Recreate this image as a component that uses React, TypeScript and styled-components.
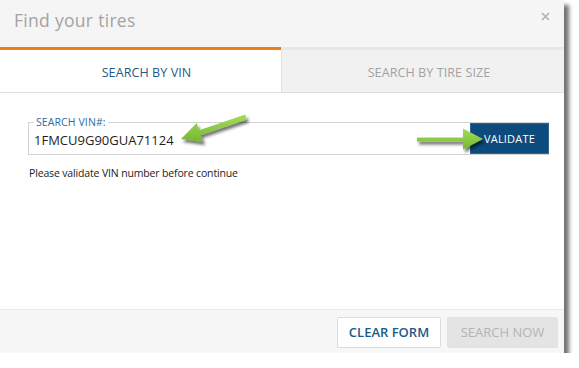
import React from "react";
import styled, { createGlobalStyle } from "styled-components";

const Global = createGlobalStyle`
  html, body { margin: 0; padding: 0; background: #ffffff; }
  body { font-family: "Open Sans", "Liberation Sans", sans-serif; }
  * { box-sizing: border-box; }
`;

const Dialog = styled.div`
  position: relative;
  width: 564px;
  height: 353px;
  background: #ffffff;
  display: flex;
  flex-direction: column;
  box-shadow: 5px 5px 4px rgba(0, 0, 0, 0.55);
`;

const Header = styled.div`
  height: 47px;
  background: #f5f5f5;
  display: flex;
  justify-content: space-between;
  align-items: flex-start;
  padding: 8px 14px 0 14px;
`;

const Title = styled.div`
  font-size: 17.5px;
  line-height: 24px;
  color: #a3a3a3;
  letter-spacing: 0.3px;
`;

const Close = styled.svg`
  margin-top: 4px;
  width: 9px;
  height: 9px;
`;

const Tabs = styled.div`
  display: flex;
  height: 46px;
`;

const Tab = styled.div<{ $active?: boolean; $w?: number }>`
  flex: ${(p) => (p.$w ? `0 0 ${p.$w}px` : "1 1 auto")};
  display: flex;
  align-items: center;
  justify-content: center;
  padding: 2px 0 0 12px;
  font-size: 12.5px;
  letter-spacing: 0.1px;
  background: ${(p) => (p.$active ? "#ffffff" : "#f1f1f1")};
  color: ${(p) => (p.$active ? "#1d5a88" : "#a2a2a2")};
  border-top: 3px solid ${(p) => (p.$active ? "#f07d1b" : "#e8e8e8")};
  border-left: ${(p) => (p.$active ? "none" : "1px solid #e2e2e2")};
  border-bottom: 1px solid #dedede;
`;

const Body = styled.div`
  flex: 1;
  padding: 29px 15px 0 28px;
`;

const Field = styled.div`
  position: relative;
  display: flex;
  align-items: stretch;
  height: 33px;
  border: 1px solid #d2d2d2;
  border-right: none;
`;

const Legend = styled.span`
  position: absolute;
  top: -6px;
  left: 5px;
  padding: 0 2px;
  background: #ffffff;
  font-size: 10.5px;
  line-height: 11px;
  color: #2d6ba1;
  letter-spacing: 0.1px;
`;

const VinText = styled.div`
  flex: 1;
  display: flex;
  align-items: center;
  padding: 2px 0 0 5px;
  font-size: 13px;
  color: #1e1e1e;
`;

const Validate = styled.button`
  width: 79px;
  border: 1px solid #2f6696;
  background: #0c4b7b;
  color: #ffffff;
  font-family: "Open Sans", "Liberation Sans", sans-serif;
  font-size: 11px;
  letter-spacing: 0.2px;
  padding: 0;
  margin: 0;
  cursor: pointer;
`;

const Message = styled.div`
  margin: 11px 0 0 1px;
  font-size: 10.5px;
  line-height: 14px;
  letter-spacing: -0.15px;
  color: #1c1c1c;
`;

const Footer = styled.div`
  height: 44px;
  border-top: 1px solid #e8e8e8;
  background: #f7f7f7;
  display: flex;
  justify-content: flex-end;
  align-items: center;
  gap: 6px;
  padding: 1px 6px 0 0;
`;

const FooterButton = styled.button<{ $disabled?: boolean; $w: number }>`
  width: ${(p) => p.$w}px;
  height: 31px;
  border-radius: 2px;
  border: 1px solid ${(p) => (p.$disabled ? "#e3e3e3" : "#dcdcdc")};
  background: ${(p) => (p.$disabled ? "#e4e4e4" : "#ffffff")};
  color: ${(p) => (p.$disabled ? "#b3b3b3" : "#1d5a88")};
  font-family: "Open Sans", "Liberation Sans", sans-serif;
  font-size: 13px;
  font-weight: ${(p) => (p.$disabled ? 400 : 600)};
  padding: 0;
  cursor: pointer;
`;

const Overlay = styled.svg`
  position: absolute;
  top: 0;
  left: 0;
  width: 564px;
  height: 368px;
  pointer-events: none;
  overflow: visible;
`;

export default function App() {
  return (
    <>
      <Global />
      <Dialog>
        <Header>
          <Title>Find your tires</Title>
          <Close viewBox="0 0 9 9">
            <path d="M1 1 L8 8 M8 1 L1 8" stroke="#b0b0b0" strokeWidth="1.6" />
          </Close>
        </Header>
        <Tabs>
          <Tab $active $w={281}>SEARCH BY VIN</Tab>
          <Tab>SEARCH BY TIRE SIZE</Tab>
        </Tabs>
        <Body>
          <Field>
            <Legend>SEARCH VIN#:</Legend>
            <VinText>1FMCU9G90GUA71124</VinText>
            <Validate>VALIDATE</Validate>
          </Field>
          <Message>Please validate VIN number before continue</Message>
        </Body>
        <Footer>
          <FooterButton $w={104}>CLEAR FORM</FooterButton>
          <FooterButton $w={111} $disabled>SEARCH NOW</FooterButton>
        </Footer>
        <Overlay viewBox="0 0 564 368">
          <defs>
            <filter id="sh" x="-30%" y="-60%" width="160%" height="220%">
              <feDropShadow dx="2" dy="3" stdDeviation="1.8" floodColor="#000" floodOpacity="0.55" />
            </filter>
            <linearGradient id="g1" x1="0" y1="0" x2="0" y2="1">
              <stop offset="0" stopColor="#a6dc5a" />
              <stop offset="1" stopColor="#74b732" />
            </linearGradient>
          </defs>
          <polygon
            filter="url(#sh)"
            fill="url(#g1)"
            points="246.8,119.4 200.7,135.0 203.1,142.1 181,139 196.7,123.1 199.1,130.2 245.2,114.6"
          />
          <polygon
            filter="url(#sh)"
            fill="url(#g1)"
            points="417,137.5 463,137.5 463,128.5 483,139 463,149.5 463,141.5 417,141.5"
          />
        </Overlay>
      </Dialog>
    </>
  );
}
